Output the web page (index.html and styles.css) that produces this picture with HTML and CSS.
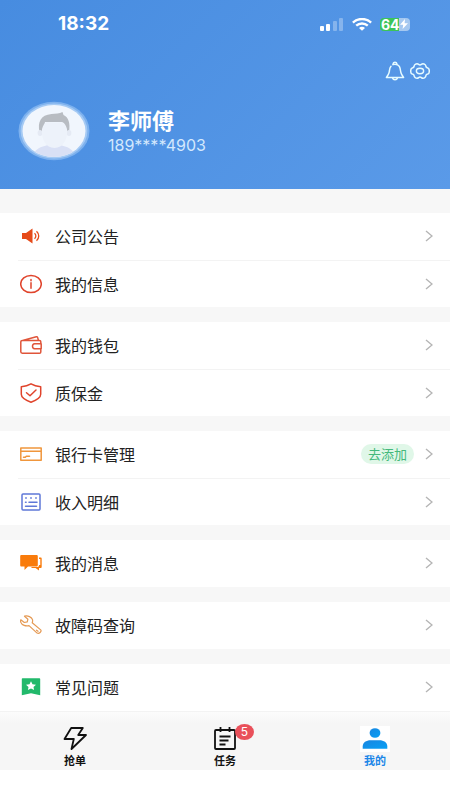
FILE: index.html
```html
<!DOCTYPE html>
<html lang="zh-CN">
<head>
<meta charset="utf-8">
<meta name="viewport" content="width=device-width, initial-scale=1">
<title>我的</title>
<link rel="stylesheet" href="styles.css">
</head>
<body>
<header class="hero">
  <div class="status">
    <time class="clock">18:32</time>
    <div class="signals">
      <svg class="bars" width="24" height="13" viewBox="0 0 24 13" fill="#fff" aria-hidden="true">
        <rect x="0" y="8" width="4" height="5" rx="1"/><rect x="6" y="6" width="4" height="7" rx="1"/>
        <rect x="13" y="3" width="4" height="10" rx="1" opacity=".3"/><rect x="19" y="0" width="4" height="13" rx="1" opacity=".3"/>
      </svg>
      <svg width="20" height="13" viewBox="0 0 20 13" fill="none" stroke="#fff" stroke-width="2.4" aria-hidden="true">
        <path d="M.9 4.600C6-.2 14-.2 19.100 4.600M4.200 7.700c3.300-3 8.300-3 11.600 0"/><path d="M7 10c1.800-1.600 4.200-1.600 6 0l-3 2.800z" fill="#fff" stroke="none"/>
      </svg>
      <div class="battery">
        <span class="charge">64</span>
        <svg width="8" height="10" viewBox="0 0 8 10" aria-hidden="true"><path d="M5 0L0 5.800h3.200L2.600 10 8 4.200H4.600z" fill="#fff"/></svg>
      </div>
    </div>
  </div>
  <div class="tools">
    <button type="button" aria-label="通知">
      <svg width="20" height="20" viewBox="0 0 20 20" fill="none" stroke="#e6fbff" stroke-width="1.500" stroke-linejoin="round" stroke-linecap="round">
        <path d="M6 5.200C4.400 7 4.600 9 4.200 11.200 3.800 13.400 2.600 14.400 1.400 16.600h17.200c-1.200-2.200-2.400-3.200-2.800-5.400C15.200 7.600 15 3.200 10 3.200c-.8 0-1.500.1-2.100.4"/>
        <path d="M8.200 3.200V2.400C8.500.8 11.500.8 11.800 2.400v.8M7.600 17c.6 2.300 4.200 2.300 4.800 0"/>
      </svg>
    </button>
    <button type="button" aria-label="设置">
      <svg width="20" height="20" viewBox="0 0 20 20" fill="none" stroke="#e6fbff" stroke-width="1.500" stroke-linejoin="round">
        <path d="M5.200 3.400c1-.7 2.600-.7 3.400 0 .7.600 2.100.600 2.800 0 .8-.7 2.400-.7 3.400 0 .9.600 1.100 1.300 1.100 2 .1.900.8 1.300 1.900 1.500 1.200.3 1.500 1.300 1.500 3.100s-.3 2.800-1.500 3.100c-1.100.2-1.800.6-1.900 1.500 0 .7-.2 1.400-1.100 2-1 .7-2.600.7-3.400 0-.7-.6-2.100-.6-2.800 0-.8.7-2.400.7-3.400 0-.9-.6-1.100-1.300-1.100-2-.1-.9-.8-1.300-1.900-1.500C1 12.800.7 11.800.7 10s.3-2.800 1.500-3.100c1.100-.2 1.800-.6 1.900-1.500 0-.7.2-1.400 1.100-2z"/>
        <ellipse cx="10" cy="10" rx="3.600" ry="2.700"/>
      </svg>
    </button>
  </div>
  <div class="profile">
    <svg class="avatar" width="72" height="60" viewBox="0 0 72 60" role="img" aria-label="头像">
      <defs><clipPath id="face"><ellipse cx="36" cy="30" rx="31.500" ry="26"/></clipPath></defs>
      <ellipse cx="36" cy="30" rx="35.500" ry="29.300" fill="#7db1ee"/>
      <ellipse cx="36" cy="30" rx="33.400" ry="27.600" fill="#a5caf4"/>
      <g clip-path="url(#face)">
        <rect width="72" height="60" fill="#f1f6fd"/>
        <path d="M13 60c2-12 9-14 17-16h12c8 2 15 4 17 16z" fill="#d9e0f5"/>
        <path d="M21.500 31c-2-10 1-17 12-18 4-.4 8 0 11-2l1 3c5 2 7 8 5.500 17l-3-1-4-9H27l-2 9z" fill="#b8bcc2"/>
        <ellipse cx="22" cy="32" rx="2.400" ry="3" fill="#e5eaf4"/><ellipse cx="51" cy="32" rx="2.400" ry="3" fill="#e5eaf4"/>
        <path d="M24 28c1-3 2-6 5-7 5 1 10 1 15 0 3 1 4 4 5 7 1 10-4 19-12.500 19S23 38 24 28z" fill="#edf2fa"/>
      </g>
    </svg>
    <div class="identity">
      <h1>李师傅</h1>
      <p>189****4903</p>
    </div>
  </div>
</header>

<main class="menu">
  <section class="group">
    <a class="row" href="#notice">
      <svg class="icon" viewBox="0 0 22 20" fill="#e64a19"><path d="M2 7h4l6.500-4.500v15L6 13H2z"/><path d="M14.500 7.300c1.800 1.600 1.800 3.800 0 5.400M16.500 5.200c3 2.800 3 6.800 0 9.600" fill="none" stroke="#e64a19" stroke-width="1.300"/></svg>
      <span class="label">公司公告</span>
      <svg class="chevron" viewBox="0 0 8 12"><path d="M1 1l6 5-6 5"/></svg>
    </a>
    <a class="row" href="#info">
      <svg class="icon line" viewBox="0 0 22 20" stroke="#e0442c"><ellipse cx="11" cy="10" rx="10.300" ry="8.600"/><path d="M11 8.700v5.500M11 5.500v1.200"/></svg>
      <span class="label">我的信息</span>
      <svg class="chevron" viewBox="0 0 8 12"><path d="M1 1l6 5-6 5"/></svg>
    </a>
  </section>
  <section class="group">
    <a class="row" href="#wallet">
      <svg class="icon line" viewBox="0 0 22 20" stroke="#e0553a"><path d="M20.800 8V6.700c0-.8-.5-1.200-1.300-1.200H2.300C1.300 5.500.8 6 .8 6.800v10c0 .9.500 1.400 1.500 1.400h17.200c.9 0 1.300-.5 1.300-1.300v-2.400M3.500 5.300l12.800-3.600c.8-.2 1.100.1 1.300.7l.8 2.900M14.600 8.700h6.600v5h-6.600c-2.800-.3-2.800-4.700 0-5z"/></svg>
      <span class="label">我的钱包</span>
      <svg class="chevron" viewBox="0 0 8 12"><path d="M1 1l6 5-6 5"/></svg>
    </a>
    <a class="row" href="#deposit">
      <svg class="icon line" viewBox="0 0 22 20" stroke="#e0442c"><path d="M11 .8C8 2.600 4.500 3.400 1.300 3.700v7.500c0 4.200 6 6.600 9.700 8 3.700-1.400 9.700-3.800 9.700-8V3.700C17.500 3.400 14 2.600 11 .8z"/><path d="M6.500 9.800l3.500 3L16 7"/></svg>
      <span class="label">质保金</span>
      <svg class="chevron" viewBox="0 0 8 12"><path d="M1 1l6 5-6 5"/></svg>
    </a>
  </section>
  <section class="group">
    <a class="row" href="#cards">
      <svg class="icon line" viewBox="0 0 22 20" stroke="#f0963c"><path d="M.8 4h20.400v12.200H.8zM.8 7.200h20.400"/><path d="M3.500 13.200h1.800l1-1h3.200"/></svg>
      <span class="label">银行卡管理</span>
      <span class="pill">去添加</span>
      <svg class="chevron" viewBox="0 0 8 12"><path d="M1 1l6 5-6 5"/></svg>
    </a>
    <a class="row" href="#income">
      <svg class="icon line" viewBox="0 0 22 20" stroke="#5f78d8"><rect x="2" y="2" width="18" height="16" rx="1"/><path d="M5.700 6h.6M10.700 6h.6M15.700 6h.6M9 10.200h8M5.500 10.200h.6M5.500 14.200h11"/></svg>
      <span class="label">收入明细</span>
      <svg class="chevron" viewBox="0 0 8 12"><path d="M1 1l6 5-6 5"/></svg>
    </a>
  </section>
  <section class="group">
    <a class="row" href="#messages">
      <svg class="icon" viewBox="0 0 22 20" fill="#f97b0b"><path d="M1.500 2h15c.8 0 1.300.5 1.300 1.300v8.900c0 .8-.5 1.300-1.300 1.300H8L4.500 17v-3.500h-3c-.8 0-1.300-.5-1.300-1.300V3.300C.2 2.500.7 2 1.500 2z"/><path d="M19 4.500h1.500c.8 0 1.200.5 1.200 1.200v8.100c0 .8-.4 1.300-1.200 1.300H19v2.400l-3.500-2.400h-4.800l1.500-1H17c1.500 0 2-.6 2-2l1.300-.2V6H19z"/></svg>
      <span class="label">我的消息</span>
      <svg class="chevron" viewBox="0 0 8 12"><path d="M1 1l6 5-6 5"/></svg>
    </a>
  </section>
  <section class="group">
    <a class="row" href="#codes">
      <svg class="icon line thin" viewBox="0 0 22 20" stroke="#e59a54"><path d="M4.500 1.200c3.300-.9 7.300.8 8 3.500.3 1.200.2 2-.3 3l8.500 7.200c1.300 1.500-1.600 4.400-3.600 3.200L9 10.600c-3 1-7.200-.4-8.200-3.200-.3-.9-.3-1.700 0-2.600l3.500 2.700 3-.6.6-2.700z"/><path d="M16.500 15.200l1.500 1.100"/></svg>
      <span class="label">故障码查询</span>
      <svg class="chevron" viewBox="0 0 8 12"><path d="M1 1l6 5-6 5"/></svg>
    </a>
  </section>
  <section class="group">
    <a class="row" href="#faq">
      <svg class="icon" viewBox="0 0 22 20"><path d="M2.500 1.200h17c.4 0 .7.300.7.700v16.400L11 16.200l-9.200 2.100V1.900c0-.4.300-.7.700-.7z" fill="#22b96b"/><path d="M11 4.300l1.500 3 3.500.4-2.500 2.200.6 3.100-3.100-1.600L7.900 13l.6-3.100L6 7.700l3.500-.4z" fill="#fff"/></svg>
      <span class="label">常见问题</span>
      <svg class="chevron" viewBox="0 0 8 12"><path d="M1 1l6 5-6 5"/></svg>
    </a>
  </section>
</main>

<nav class="tabs">
  <a class="tab" href="#grab">
    <svg width="30" height="26" viewBox="0 0 30 26" fill="none" stroke="#111" stroke-width="1.800" stroke-linejoin="round"><path d="M11.200 2h11.600l-4.600 7H26L11.500 23l2.300-10H4.500z"/></svg>
    <span>抢单</span>
  </a>
  <a class="tab" href="#tasks">
    <span class="glyph">
      <svg width="30" height="26" viewBox="0 0 30 26" fill="none" stroke="#111" stroke-width="1.800"><rect x="5" y="4" width="20" height="19" rx="1"/><path d="M10.500 1v5M19.500 1v5M9.500 10.500h11M9.500 14.500h9M9.500 18.500h6"/></svg>
      <span class="badge">5</span>
    </span>
    <span>任务</span>
  </a>
  <a class="tab active" href="#me" aria-current="page">
    <svg class="tile" width="30" height="26" viewBox="0 0 30 26"><defs><linearGradient id="blue" x2="1" y2="1"><stop stop-color="#1a86e0"/><stop offset="1" stop-color="#08a0f5"/></linearGradient></defs><ellipse cx="15" cy="7" rx="5.400" ry="4.800" fill="url(#blue)"/><path d="M2.700 22.700V20.500c0-4 3.500-6.200 8-6.200h8.600c4.500 0 8 2.200 8 6.200v2.200z" fill="url(#blue)"/></svg>
    <span>我的</span>
  </a>
</nav>
</body>
</html>
```
FILE: styles.css
```css
* { box-sizing: border-box; }

body {
  margin: 0;
  min-height: 100vh;
  background: #fff;
  color: #222;
  font-family: Inter, "Noto Sans CJK SC", sans-serif;
}

a { color: inherit; text-decoration: none; }

.hero {
  padding: 14px 18px 28px;
  background: linear-gradient(135deg, #478ce0, #5a9ae8);
  color: #fff;
}

.status {
  display: flex;
  align-items: center;
  justify-content: space-between;
  height: 20px;
  padding: 0 22px 0 40px;
}

.clock { font-size: 19px; font-weight: 700; line-height: 20px; }

.signals { display: flex; align-items: center; gap: 8px; }

.battery {
  display: flex;
  align-items: center;
  width: 30px;
  height: 13px;
  padding-left: 1px;
  border-radius: 4px;
  background: linear-gradient(90deg, #3cc45a 64%, #a5c8f0 64%);
}

.charge { font-size: 14px; font-weight: 700; line-height: 13px; }

.tools {
  display: flex;
  justify-content: flex-end;
  gap: 5px;
  margin-top: 27px;
  padding-right: 2px;
}

.tools button {
  display: flex;
  padding: 0;
  border: 0;
  background: none;
}

.profile { display: flex; align-items: center; gap: 18px; margin-top: 20px; }

.avatar { flex: none; }

.identity h1 { margin: 0; font-size: 22px; font-weight: 700; line-height: 28px; }

.identity p {
  margin: 0;
  color: #d3e8fd;
  font-size: 16px;
  line-height: 20px;
}

.menu {
  display: flex;
  flex-direction: column;
  gap: 15px;
  padding-top: 24px;
  background: #f7f7f7;
}

.group { background: #fff; }

.row {
  display: flex;
  align-items: center;
  height: 47px;
  margin-left: 18px;
  padding: 0 17px 1px 2px;
  font-size: 16px;
}

.row + .row { border-top: 1px solid #f3f3f3; }

.icon { flex: none; width: 22px; height: 20px; margin-right: 13px; }

.line {
  fill: none;
  stroke-width: 1.5;
  stroke-linecap: round;
  stroke-linejoin: round;
}

.thin { stroke-width: 1.2; }

.label { flex: 1; }

.pill {
  margin-right: 11px;
  padding: 0 7px;
  border-radius: 10px;
  background: #e0f7e8;
  color: #45b97c;
  font-size: 13px;
  line-height: 20px;
}

.chevron {
  width: 8px;
  height: 12px;
  fill: none;
  stroke: #b5b5b5;
  stroke-width: 1.4;
}

.tabs {
  display: flex;
  height: 59px;
  padding-top: 14px;
  border-top: 1px solid #f3f3f3;
  background: linear-gradient(#fcfcfc, #f6f6f6 12px);
}

.tab {
  flex: 1;
  display: flex;
  flex-direction: column;
  align-items: center;
  color: #111;
  font-size: 11px;
  font-weight: 700;
  line-height: 18px;
}

.active { color: #1c86e8; }

.tile { background: #fff; }

.glyph { position: relative; height: 26px; }

.badge {
  position: absolute;
  top: -2px;
  right: -14px;
  width: 19px;
  height: 16px;
  border-radius: 50%;
  background: #e9505a;
  color: #fff;
  font-size: 12px;
  font-weight: 400;
  line-height: 16px;
  text-align: center;
}
```
